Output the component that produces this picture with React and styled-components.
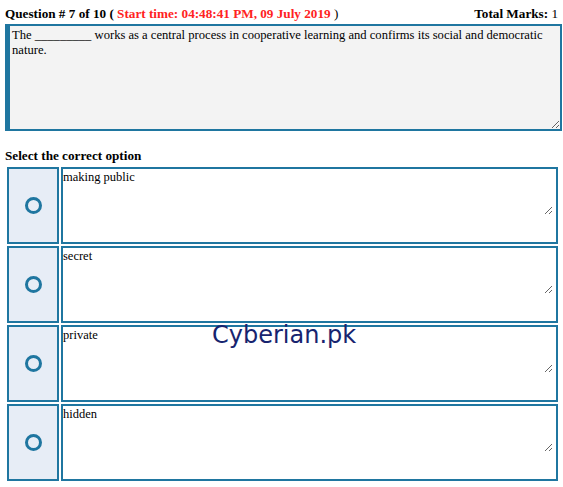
import React from "react";
import styled, { createGlobalStyle } from "styled-components";

const GlobalStyle = createGlobalStyle`
  body {
    margin: 0;
    background: #ffffff;
    font-family: "Liberation Serif", "Times New Roman", serif;
    color: #000;
  }
`;

const Page = styled.div`
  position: relative;
  padding: 5px 5px 0 5px;
`;

const Header = styled.div`
  display: flex;
  justify-content: space-between;
  align-items: baseline;
  font-size: 13.2px;
  line-height: 17px;
  height: 19px;
`;

const Bold = styled.span`
  font-weight: bold;
  color: ${(p) => p.color || "#000"};
`;

const QuestionBox = styled.textarea`
  display: block;
  box-sizing: border-box;
  width: 557px;
  height: 107px;
  margin: 0;
  padding: 2px 2px;
  border: 2px solid #1f76a0;
  border-left: 5px solid #1f76a0;
  background: #f3f3f3;
  font-family: "Liberation Serif", "Times New Roman", serif;
  font-size: 12.6px;
  line-height: 15px;
  color: #000;
  resize: vertical;
  outline: none;
`;

const SectionTitle = styled.div`
  font-weight: bold;
  font-size: 13.2px;
  line-height: 17px;
  margin: 16px 0 0 0;
  height: 19px;
`;

const Options = styled.div`
  display: flex;
  flex-direction: column;
  gap: 2px;
  padding-left: 2px;
  margin-top: 1px;
`;

const Row = styled.div`
  display: flex;
  gap: 2px;
  height: 77px;
`;

const RadioCell = styled.label`
  box-sizing: border-box;
  width: 52px;
  display: flex;
  align-items: center;
  justify-content: center;
  background: #e7edf6;
  border: 2px solid #1f76a0;
  cursor: pointer;
`;

const Ring = styled.span`
  box-sizing: border-box;
  width: 17px;
  height: 17px;
  border-radius: 50%;
  border: 3.5px solid #1f76a0;
`;

const OptionCell = styled.div`
  box-sizing: border-box;
  width: 497px;
  border: 2px solid #1f76a0;
  background: #fff;
`;

const OptionText = styled.textarea`
  display: block;
  box-sizing: border-box;
  width: 490px;
  height: 46px;
  margin: 0;
  padding: 1px 0 0 0;
  border: none;
  background: #fff;
  font-family: "Liberation Serif", "Times New Roman", serif;
  font-size: 12.5px;
  line-height: 15px;
  color: #000;
  resize: vertical;
  outline: none;
`;

const Watermark = styled.div`
  position: absolute;
  left: 212px;
  top: 321px;
  font-family: "DejaVu Sans", Verdana, sans-serif;
  font-size: 24px;
  color: #17246f;
  pointer-events: none;
`;

const options = ["making public", "secret", "private", "hidden"];

export default function App() {
  return (
    <Page>
      <GlobalStyle />
      <Header>
        <span>
          <Bold>Question # 7 of 10 ( </Bold>
          <Bold color="#ff2222">Start time: 04:48:41 PM, 09 July 2019</Bold> )
        </span>
        <span>
          <Bold>Total Marks:</Bold> 1
        </span>
      </Header>
      <QuestionBox
        readOnly
        defaultValue="The _________ works as a central process in cooperative learning and confirms its social and democratic nature."
      />
      <SectionTitle>Select the correct option</SectionTitle>
      <Options>
        {options.map((o) => (
          <Row key={o}>
            <RadioCell>
              <Ring />
            </RadioCell>
            <OptionCell>
              <OptionText readOnly defaultValue={o} />
            </OptionCell>
          </Row>
        ))}
      </Options>
      <Watermark>Cyberian.pk</Watermark>
    </Page>
  );
}
